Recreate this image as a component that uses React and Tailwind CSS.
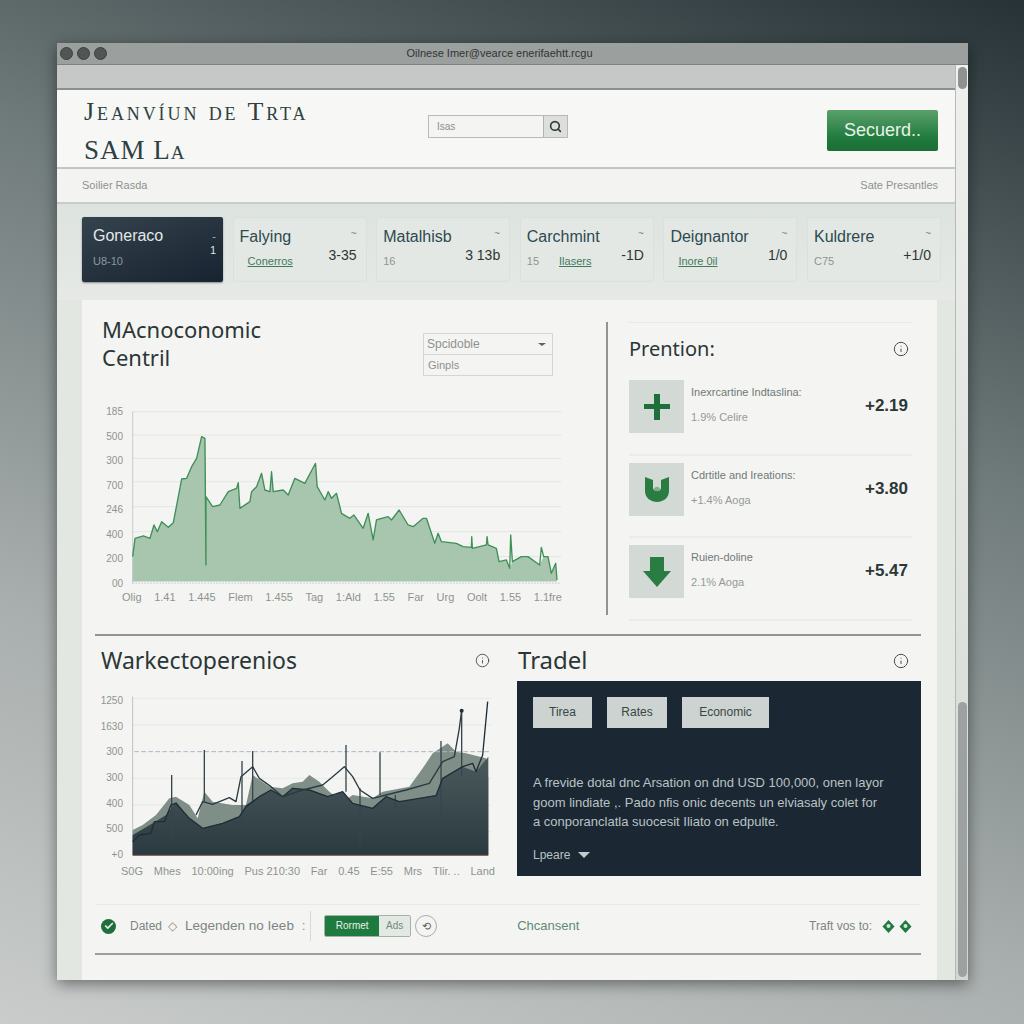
import React from 'react';
import { Search, Info, Check } from 'lucide-react';

const sans = 'font-["Liberation_Sans",Arial,sans-serif]';

const macroLine = '158,770 165,715 190,708 210,715 222,675 232,695 245,665 265,682 280,668 295,590 305,537 320,535 335,500 350,475 365,410 375,415 378,795 378,590 398,620 420,615 445,575 470,565 475,548 480,625 510,605 515,575 530,560 545,520 555,570 570,575 575,515 580,575 610,570 625,585 645,535 675,550 695,512 707,490 712,560 735,600 745,575 755,595 770,580 785,640 810,655 822,645 850,685 865,640 880,720 890,660 905,655 925,650 935,660 958,630 985,675 1000,680 1030,655 1040,655 1065,730 1075,700 1085,725 1130,730 1150,740 1175,742 1176,710 1178,745 1220,735 1222,710 1225,735 1250,745 1258,785 1280,780 1290,805 1293,705 1298,785 1325,770 1345,770 1380,795 1385,742 1392,770 1405,770 1415,820 1428,790 1432,840';
const macroFill = '158,770 165,715 190,708 210,715 222,675 232,695 245,665 265,682 280,668 295,590 305,537 320,535 335,500 350,475 365,410 375,415 378,590 398,620 420,615 445,575 470,565 475,548 480,625 510,605 515,575 530,560 545,520 555,570 570,575 575,515 580,575 610,570 625,585 645,535 675,550 695,512 707,490 712,560 735,600 745,575 755,595 770,580 785,640 810,655 822,645 850,685 865,640 880,720 890,660 905,655 925,650 935,660 958,630 985,675 1000,680 1030,655 1040,655 1065,730 1075,700 1085,725 1130,730 1150,740 1175,742 1178,745 1220,735 1225,735 1250,745 1258,785 1280,780 1290,805 1298,785 1325,770 1345,770 1380,795 1392,770 1405,770 1415,820 1428,790 1432,845 158,845';

const backArea = '130,565 160,550 200,520 240,470 260,465 300,490 325,530 345,450 370,480 430,490 470,490 490,400 540,435 580,440 610,425 640,420 660,400 690,420 720,450 760,480 790,460 850,470 880,450 960,435 1000,380 1030,335 1075,305 1100,330 1130,335 1190,350 1197,410 1197,640 130,640';
const frontArea = '130,580 190,545 230,520 260,480 300,530 340,560 400,545 450,525 470,490 510,465 545,445 580,465 610,440 660,445 720,465 760,450 790,485 850,500 890,465 930,480 990,470 1040,460 1060,410 1120,375 1160,390 1197,345 1197,640 130,640';
const marketLine = '130,600 150,580 185,575 195,540 225,540 245,490 260,485 300,530 340,560 400,545 450,525 470,495 510,465 545,445 580,465 610,440 660,445 715,465 760,450 790,485 850,500 890,465 930,480 990,470 1040,462 1060,410 1120,375 1150,365 1160,390 1180,340 1195,180';
const marketLine2 = '320,520 340,480 370,488 420,468 440,480 455,405 490,375 510,410 545,435 580,465 640,445 700,430 730,405 765,375 790,405 812,445 850,470 890,460 950,445 1020,425 1060,360 1095,345 1110,260 1117,205';
const spikes = [
  [247, 400, 585], [345, 325, 480], [458, 358, 575], [490, 328, 480], [770, 310, 450],
  [812, 440, 610], [872, 332, 460], [918, 460, 510], [1055, 298, 525], [1117, 205, 405],
];

const cards = [
  { title: 'Falying', link: 'Conerros', value: '3-35' },
  { title: 'Matalhisb', sub: '16', value: '3 13b' },
  { title: 'Carchmint', sub: '15', link: 'Ilasers', value: '-1D' },
  { title: 'Deignantor', link: 'Inore 0il', value: '1/0' },
  { title: 'Kuldrere', sub: 'C75', value: '+1/0' },
];

const stats = [
  { label: 'Inexrcartine Indtaslina:', sub: '1.9% Celire', value: '+2.19', icon: 'plus' },
  { label: 'Cdrtitle and Ireations:', sub: '+1.4% Aoga', value: '+3.80', icon: 'cup' },
  { label: 'Ruien-doline', sub: '2.1% Aoga', value: '+5.47', icon: 'down' },
];

function StatIcon({ type }) {
  return (
    <div className="w-[55px] h-[53px] bg-[#d3d9d4] flex items-center justify-center shrink-0">
      <svg width="30" height="30" viewBox="0 0 30 30" fill="#2a7d42">
        {type === 'plus' && <path d="M12 2h6v10h10v5H18v11h-6V17H2v-5h10z" fill="#1f6f3c" />}
        {type === 'cup' && (
          <>
            <path d="M3 3l8 3v8c0 4 8 4 8 0V6l8-3v14c0 7-6 11-12 11S3 24 3 17z" />
            <path d="M12 15c1-3 5-3 6 0 0 3-6 3-6 0z" fill="#7fb08e" />
          </>
        )}
        {type === 'down' && <path d="M8 0h14v14h7L15 30 1 14h7z" />}
      </svg>
    </div>
  );
}

function Diamond() {
  return (
    <svg width="17" height="15" viewBox="0 0 15 15">
      <path d="M7.5 1l6 6.5-6 6.5-6-6.5z" fill="#1f7a3f" />
      <circle cx="7.5" cy="7" r="2" fill="#d8e4da" />
    </svg>
  );
}

export default function App() {
  return (
    <div className={`w-[1024px] h-[1024px] pt-[43px] pl-[57px] bg-[linear-gradient(200deg,#263236_0%,#6f7a7a_35%,#a9afae_70%,#c9cccb_100%)] ${sans}`}>
      <div className="w-[911px] h-[937px] flex flex-col shadow-[0_4px_14px_rgba(0,0,0,0.45)]">
        {/* title bar */}
        <div className="h-[22px] shrink-0 grid grid-cols-[1fr_auto_1fr] items-center px-[2px] bg-[#9b9f9e] border-b border-[#7d8281]">
          <div className="flex gap-[4px] ml-[1px]">
            <span className="w-[13px] h-[13px] rounded-full bg-[#4f5654] border border-[#3a403f]" />
            <span className="w-[13px] h-[13px] rounded-full bg-[#4f5654] border border-[#3a403f]" />
            <span className="w-[13px] h-[13px] rounded-full bg-[#4f5654] border border-[#3a403f]" />
          </div>
          <div className="text-[11px] text-[#2f3534] mr-[26px]">Oilnese Imer@vearce enerifaehtt.rcgu</div>
          <div />
        </div>

        <div className="flex-1 flex min-h-0">
          <div className="w-[898px] flex flex-col">
            <div className="h-[25px] shrink-0 bg-[#c5c8c7] border-b-2 border-[#8b8f8d]" />

            {/* header */}
            <div className="h-[79px] shrink-0 flex items-center pt-[4px] pl-[27px] pr-[17px] bg-[#f7f8f5] border-b-2 border-[#c3c7c4]">
              <div className="w-[344px] font-['Liberation_Serif',serif] text-[#2e4042]">
                <div className="text-[26px] leading-[38px] [font-variant:small-caps] tracking-[2.9px] whitespace-nowrap">Jeanvíun de Trta</div>
                <div className="text-[27px] leading-[38px] [font-variant:small-caps] tracking-[1px]">SAM La</div>
              </div>
              <div className="w-[140px] h-[23px] -mt-[9px] flex border border-[#b7bbb8] bg-[#f4f5f2]">
                <div className="flex-1 pl-[8px] text-[10px] leading-[21px] text-[#8b908d]">Isas</div>
                <div className="w-[24px] bg-[#dcdfdc] border-l border-[#b0b4b1] flex items-center justify-center">
                  <Search size={13} strokeWidth={3} className="text-[#2f3a3a]" />
                </div>
              </div>
              <button className="ml-auto w-[111px] h-[41px] rounded-[2px] bg-[linear-gradient(180deg,#5aa06b_0%,#1f7a3c_70%,#1c6e36_100%)] text-[#e8f2ea] text-[18px]">
                Secuerd..
              </button>
            </div>

            {/* sub bar */}
            <div className="h-[35px] shrink-0 flex items-center justify-between pl-[25px] pr-[17px] bg-[#f3f4f1] border-b-2 border-[#c8ccc9] text-[11px] text-[#8d928f]">
              <span>Soilier Rasda</span>
              <span>Sate Presantles</span>
            </div>

            {/* cards */}
            <div className="h-[96px] shrink-0 flex gap-[9.6px] pl-[25px] pt-[13px] bg-[linear-gradient(180deg,#dde3df,#e6e9e5)]">
              <div className="w-[141px] h-[65px] shrink-0 flex justify-between pl-[11px] pr-[7px] py-[9px] rounded-[2px] bg-[linear-gradient(160deg,#35434e,#172330)] shadow-[0_1px_2px_rgba(0,0,0,0.4)]">
                <div>
                  <div className="text-[16px] leading-[20px] text-[#e4e8e8]">Goneraco</div>
                  <div className="mt-[7px] text-[11px] text-[#8b98a0]">U8-10</div>
                </div>
                <div className="text-[11px] leading-[14px] text-[#aab2b6] text-right mt-[3px]">
                  <div>-</div>
                  <div className="text-[#dfe4e4]">1</div>
                </div>
              </div>
              {cards.map((c) => (
                <div key={c.title} className="w-[134px] h-[65px] shrink-0 flex justify-between pl-[6px] pr-[9px] py-[9px] rounded-[3px] border border-[#dbe0dc] bg-[#e3e8e4]">
                  <div>
                    <div className="text-[16px] leading-[20px] text-[#2e4a50] whitespace-nowrap">{c.title}</div>
                    <div className="mt-[7px] flex gap-[20px] text-[11px] leading-[15px] whitespace-nowrap">
                      {c.sub && <span className="text-[#8d9692]">{c.sub}</span>}
                      {c.link && <span className={`underline text-[#3f7a5c] ${c.sub ? '' : 'ml-[8px]'}`}>{c.link}</span>}
                    </div>
                  </div>
                  <div className="flex flex-col items-end">
                    <span className="text-[10px] leading-[14px] text-[#7c8582]">~</span>
                    <span className="mt-[5px] text-[14px] leading-[18px] text-[#2c3635] whitespace-nowrap">{c.value}</span>
                  </div>
                </div>
              ))}
            </div>

            {/* body */}
            <div className="flex-1 bg-[#e3e7e2] pl-[25px] pr-[18px]">
              <div className="h-full bg-[#f4f5f2] pl-[13px] pr-[16px]">
                {/* top row */}
                <div className="h-[336px] pt-[22px] flex border-b-2 border-[#8f9491]">
                  <div className="w-[513px] h-[293px] border-r-2 border-[#8f9491] pl-[7px]">
                    <div className="flex justify-between pr-[53px]">
                      <div className="font-['Noto_Sans',sans-serif] text-[22px] leading-[28px] text-[#2b3636] -mt-[7px]">
                        <div>MAcnoconomic</div>
                        <div>Centril</div>
                      </div>
                      <div className="w-[130px] mt-[11px] border border-[#d3d7d4] text-[12px] text-[#8d928f]">
                        <div className="h-[21px] flex items-center justify-between px-[3px] border-b border-[#d3d7d4]">
                          <span>Spcidoble</span>
                          <span className="w-0 h-0 mr-[3px] border-x-[4px] border-x-transparent border-t-[3px] border-t-[#5a6260]" />
                        </div>
                        <div className="h-[20px] leading-[20px] px-[4px] text-[11px]">Ginpls</div>
                      </div>
                    </div>
                    <div className="mt-[30px] flex text-[10px] text-[#8e9390]">
                      <div className="w-[30px] h-[184px] -ml-[2px] pr-[7px] flex flex-col justify-between items-end leading-[12px]">
                        <span>185</span><span>500</span><span>300</span><span>700</span><span>246</span><span>400</span><span>200</span><span>00</span>
                      </div>
                      <div>
                        <svg width="433" height="178" viewBox="150 330 1300 534" className="block mt-[4px]">
                          {[335, 405, 475, 545, 620, 695, 770].map((y) => (
                            <line key={y} x1="158" x2="1445" y1={y} y2={y} stroke="#e3e6e2" strokeWidth="3" />
                          ))}
                          <line x1="158" x2="158" y1="335" y2="850" stroke="#c8ccc9" strokeWidth="3" />
                          <polygon points={macroFill} fill="#a8c5ad" />
                          <polyline points={macroLine} fill="none" stroke="#3f8f58" strokeWidth="4" strokeLinejoin="round" />
                          <line x1="158" x2="1440" y1="850" y2="850" stroke="#c4c8c5" strokeWidth="5" strokeDasharray="3 6" />
                        </svg>
                        <div className="mt-[3px] -ml-[8px] w-[440px] flex justify-between whitespace-nowrap leading-[12px] text-[11px]">
                          <span>Olig</span><span>1.41</span><span>1.445</span><span>Flem</span><span>1.455</span><span>Tag</span><span>1:Ald</span><span>1.55</span><span>Far</span><span>Urg</span><span>Oolt</span><span>1.55</span><span>1.1fre</span>
                        </div>
                      </div>
                    </div>
                  </div>

                  <div className="flex-1 pl-[21px] pr-[9px]">
                    <div className="h-[51px] flex items-center justify-between border-t border-[#e6e9e5] pr-[3px] pt-[2px]">
                      <span className="font-['Noto_Sans',sans-serif] text-[20px] text-[#2b3636]">Prention:</span>
                      <Info size={16} strokeWidth={1.5} className="text-[#4a5453]" />
                    </div>
                    {stats.map((s) => (
                      <div key={s.label} className="h-[82.5px] pt-[7px] border-b-2 border-[#eaece8] flex gap-[7px]">
                        <StatIcon type={s.icon} />
                        <div className="flex-1 pt-[5px]">
                          <div className="text-[11px] leading-[14px] text-[#707976] whitespace-nowrap">{s.label}</div>
                          <div className="mt-[11px] text-[11px] leading-[14px] text-[#959a97]">{s.sub}</div>
                        </div>
                        <div className="pt-[15px] pr-[4px] text-[17px] leading-[22px] font-bold text-[#2c3837]">{s.value}</div>
                      </div>
                    ))}
                  </div>
                </div>

                {/* bottom row */}
                <div className="h-[269px] flex gap-[12px] pt-[9px] border-b border-[#e6e9e5]">
                  <div className="w-[410px]">
                    <div className="h-[36px] flex items-start justify-between pl-[6px] pr-[15px]">
                      <span className="font-['Noto_Sans',sans-serif] text-[23px] leading-[30px] text-[#2b3636]">Warkectoperenios</span>
                      <Info size={15} strokeWidth={1.5} className="mt-[8px] text-[#4a5453]" />
                    </div>
                    <div className="mt-[14px] flex text-[10px] text-[#8e9390]">
                      <div className="w-[36px] h-[166px] flex flex-col justify-between items-end leading-[12px] pr-[8px]">
                        <span>1250</span><span>1630</span><span>300</span><span>300</span><span>400</span><span>500</span><span>+0</span>
                      </div>
                      <div>
                        <svg width="362" height="165" viewBox="125 160 1086 495" className="block">
                          <defs>
                            <linearGradient id="marketFront" x1="0" y1="0" x2="0" y2="1">
                              <stop offset="0" stopColor="#4a5a5c" />
                              <stop offset="1" stopColor="#2b3a40" />
                            </linearGradient>
                          </defs>
                          {[170, 250, 410, 490, 570].map((y) => (
                            <line key={y} x1="130" x2="1205" y1={y} y2={y} stroke="#e6e8e4" strokeWidth="3" />
                          ))}
                          <line x1="130" x2="130" y1="165" y2="640" stroke="#bfc3c0" strokeWidth="3" />
                          <polygon points={backArea} fill="#7f8f87" />
                          <polygon points={frontArea} fill="url(#marketFront)" />
                          <line x1="135" x2="1205" y1="330" y2="330" stroke="#a9b6c6" strokeWidth="3" strokeDasharray="14 7" />
                          {spikes.map(([x, a, b]) => (
                            <line key={x} x1={x} x2={x} y1={a} y2={b} stroke="#36464c" strokeWidth="4" />
                          ))}
                          <polyline points={marketLine} fill="none" stroke="#1f2d38" strokeWidth="4" strokeLinejoin="round" />
                          <polyline points={marketLine2} fill="none" stroke="#2a3a42" strokeWidth="4" strokeLinejoin="round" />
                          <circle cx="1117" cy="207" r="6" fill="#1f2d38" />
                          <line x1="130" x2="1197" y1="641" y2="641" stroke="#7a4a40" strokeWidth="3" />
                        </svg>
                        <div className="mt-[5px] -ml-[10px] w-[374px] flex justify-between whitespace-nowrap leading-[12px] text-[11px]">
                          <span>S0G</span><span>Mhes</span><span>10:00ing</span><span>Pus 210:30</span><span>Far</span><span>0.45</span><span>E:55</span><span>Mrs</span><span>Tlir. ..</span><span>Land</span>
                        </div>
                      </div>
                    </div>
                  </div>

                  <div className="flex-1">
                    <div className="h-[36px] flex items-start justify-between pl-[1px] pr-[12px]">
                      <span className="font-['Noto_Sans',sans-serif] text-[24px] leading-[30px] text-[#2b3636]">Tradel</span>
                      <Info size={16} strokeWidth={1.5} className="mt-[8px] text-[#4a5453]" />
                    </div>
                    <div className="h-[195px] bg-[#1b2733] pl-[16px] pt-[16px] pr-[12px] text-[#b9c2c4]">
                      <div className="flex gap-[15px] text-[12px] text-[#3a4645]">
                        <div className="w-[59px] h-[31px] leading-[31px] text-center bg-[#ccd3d0]">Tirea</div>
                        <div className="w-[60px] h-[31px] leading-[31px] text-center bg-[#ccd3d0]">Rates</div>
                        <div className="w-[87px] h-[31px] leading-[31px] text-center bg-[#ccd3d0]">Economic</div>
                      </div>
                      <p className="mt-[45px] text-[13px] leading-[19.5px] whitespace-nowrap">
                        A frevide dotal dnc Arsation on dnd USD 100,000, onen layor<br />
                        goom lindiate ,. Pado nfis onic decents un elviasaly colet for<br />
                        a conporanclatla suocesit Iliato on edpulte.
                      </p>
                      <div className="mt-[14px] flex items-center gap-[8px] text-[12px]">
                        <span>Lpeare</span>
                        <span className="w-0 h-0 border-x-[6px] border-x-transparent border-t-[6px] border-t-[#c3cbcd]" />
                      </div>
                    </div>
                  </div>
                </div>

                {/* footer */}
                <div className="h-[50px] pb-[6px] flex items-center border-b-2 border-[#9a9f9c] text-[12px] text-[#7c8582]">
                  <span className="w-[15px] h-[15px] ml-[6px] rounded-full bg-[#1f6f3c] flex items-center justify-center">
                    <Check size={10} strokeWidth={4} className="text-[#e5efe7]" />
                  </span>
                  <span className="ml-[14px]">Dated</span>
                  <span className="ml-[6px] text-[#8a938f]">◇</span>
                  <span className="ml-[8px] text-[13.5px] whitespace-nowrap">Legenden no Ieeb</span>
                  <span className="ml-[8px] pr-[5px] h-[30px] leading-[30px] border-r border-[#d5d8d5]">:</span>
                  <div className="ml-[13px] flex h-[22px] rounded-[2px] overflow-hidden border border-[#a4b0a8] text-[10px]">
                    <span className="w-[54px] leading-[20px] text-center bg-[#1f7a3f] text-[#e6f0e8]">Rormet</span>
                    <span className="w-[31px] leading-[20px] text-center bg-[#e2e9e3]">Ads</span>
                  </div>
                  <span className="ml-[4px] w-[22px] h-[22px] rounded-full border border-[#a9aeab] flex items-center justify-center text-[11px] text-[#5c6664]">⟲</span>
                  <span className="ml-[80px] text-[13px] text-[#5f8a76]">Chcansent</span>
                  <span className="ml-auto text-[12px] whitespace-nowrap">Traft vos to:</span>
                  <span className="ml-[8px] mr-[7px] flex">
                    <Diamond />
                    <Diamond />
                  </span>
                </div>
              </div>
            </div>
          </div>

          {/* scrollbar */}
          <div className="w-[13px] border-l border-[#b6bab7] flex flex-col justify-between pb-[3px] bg-[linear-gradient(180deg,#eef0ed,#d3d7d4)]">
            <div className="mx-auto mt-[2px] w-[9px] h-[22px] rounded-full bg-[#8e9391]" />
            <div className="mx-auto w-[9px] h-[275px] rounded-full bg-[#9da2a0]" />
          </div>
        </div>
      </div>
    </div>
  );
}
